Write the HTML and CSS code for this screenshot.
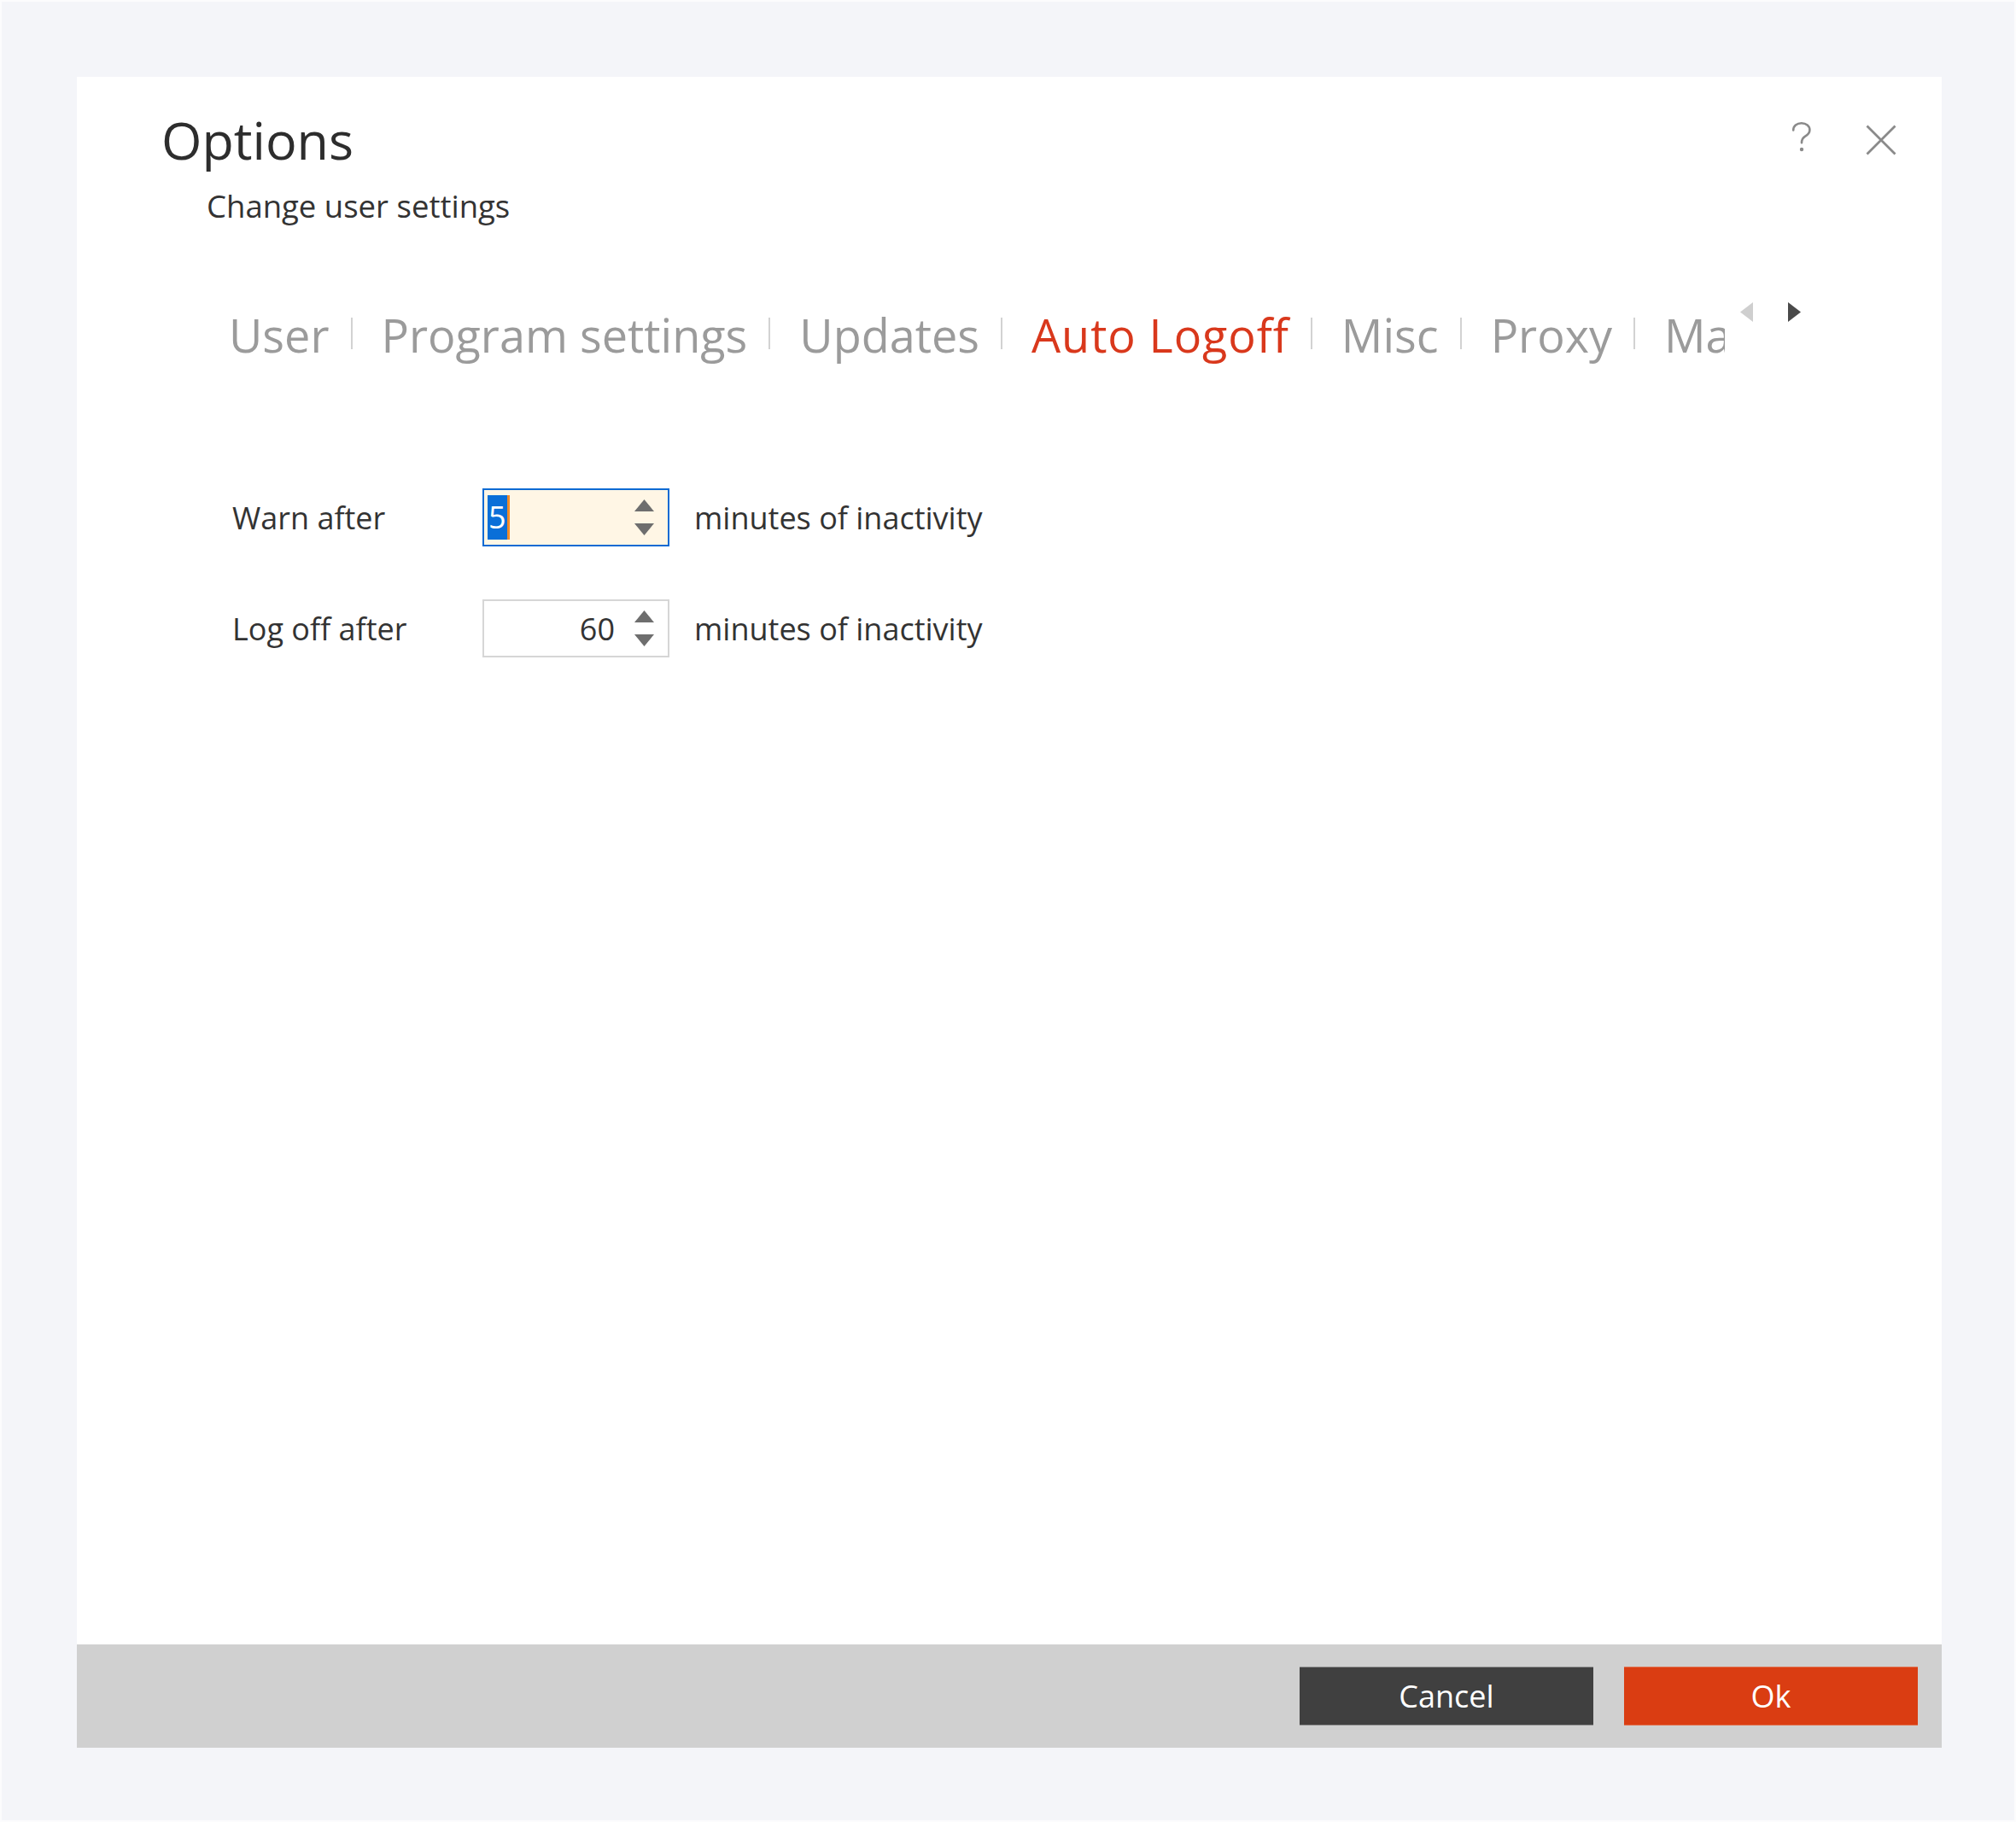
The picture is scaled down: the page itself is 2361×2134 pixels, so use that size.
FILE: index.html
```html
<!DOCTYPE html>
<html lang="en">
<head>
<meta charset="utf-8">
<title>Options</title>
<link rel="stylesheet" href="styles.css">
</head>
<body>
<div class="page">
  <div class="dialog">
    <header class="dlg-head">
      <div class="titles">
        <h1 class="title">Options</h1>
        <p class="subtitle">Change user settings</p>
      </div>
      <div class="head-icons">
        <svg class="icon-help" width="24" height="36" viewBox="0 0 24 36">
          <path d="M2.2 9.5 C2.2 4.6 6.2 1.3 11.8 1.3 C17.4 1.3 21.4 4.6 21.4 9.2 C21.4 13.2 18.6 15.2 15.8 16.9 C13.1 18.6 12 20.2 12 24.2" fill="none" stroke="#8a8a8a" stroke-width="2.6" stroke-linecap="round"/>
          <circle cx="12" cy="32" r="2.2" fill="#8a8a8a"/>
        </svg>
        <svg class="icon-close" width="36" height="36" viewBox="0 0 36 36">
          <path d="M1.5 1.5 L34.5 34.5 M34.5 1.5 L1.5 34.5" stroke="#8a8a8a" stroke-width="2.8" fill="none"/>
        </svg>
      </div>
    </header>

    <nav class="tabbar">
      <div class="tabs-viewport">
        <div class="tabs">
          <span class="tab">User</span><span class="sep"></span>
          <span class="tab">Program settings</span><span class="sep"></span>
          <span class="tab">Updates</span><span class="sep"></span>
          <span class="tab active">Auto Logoff</span><span class="sep"></span>
          <span class="tab">Misc</span><span class="sep"></span>
          <span class="tab">Proxy</span><span class="sep"></span>
          <span class="tab">Mail settings</span>
        </div>
      </div>
      <div class="tab-arrows">
        <svg class="arrow arrow-left" width="15" height="23" viewBox="0 0 15 23"><path d="M15 0 L0 11.5 L15 23 Z" fill="#cfcfcf"/></svg>
        <svg class="arrow arrow-right" width="15" height="23" viewBox="0 0 15 23"><path d="M0 0 L15 11.5 L0 23 Z" fill="#4a4a4a"/></svg>
      </div>
    </nav>

    <main class="content">
      <div class="form-row">
        <span class="label">Warn after</span>
        <div class="spin focused">
          <span class="spin-val left"><span class="sel">5</span><span class="caret"></span></span>
          <span class="spin-btns">
            <svg width="23" height="14" viewBox="0 0 23 14"><path d="M11.5 0 L23 14 L0 14 Z" fill="#6e6e6e"/></svg>
            <svg width="23" height="14" viewBox="0 0 23 14"><path d="M0 0 L23 0 L11.5 14 Z" fill="#6e6e6e"/></svg>
          </span>
        </div>
        <span class="suffix">minutes of inactivity</span>
      </div>
      <div class="form-row">
        <span class="label">Log off after</span>
        <div class="spin">
          <span class="spin-val right">60</span>
          <span class="spin-btns">
            <svg width="23" height="14" viewBox="0 0 23 14"><path d="M11.5 0 L23 14 L0 14 Z" fill="#6e6e6e"/></svg>
            <svg width="23" height="14" viewBox="0 0 23 14"><path d="M0 0 L23 0 L11.5 14 Z" fill="#6e6e6e"/></svg>
          </span>
        </div>
        <span class="suffix">minutes of inactivity</span>
      </div>
    </main>

    <footer class="dlg-foot">
      <button class="btn btn-cancel" type="button">Cancel</button>
      <button class="btn btn-ok" type="button">Ok</button>
    </footer>
  </div>
</div>
</body>
</html>
```

FILE: styles.css
```css
* { box-sizing: border-box; }

html, body {
  margin: 0;
  padding: 0;
  background: #fcfcfd;
}

body {
  font-family: "Segoe UI", "Open Sans", "Noto Sans", sans-serif;
  color: #333333;
}

.page {
  width: 2361px;
  height: 2134px;
  border: 2px solid #fcfcfd;
  background: #f4f5f9;
  padding: 88px 0 0 88px;
}

.dialog {
  width: 2184px;
  height: 1957px;
  background: #ffffff;
  display: flex;
  flex-direction: column;
}

/* Header */
.dlg-head {
  display: flex;
  justify-content: space-between;
  align-items: flex-start;
  padding: 43px 53px 0 99px;
}

.title {
  margin: 0;
  font-size: 61px;
  font-weight: 400;
  line-height: 1;
  color: #2d2d2d;
}

.subtitle {
  margin: 29px 0 0 53px;
  font-size: 36.5px;
  line-height: 1;
  color: #333333;
}

.head-icons {
  display: flex;
  align-items: flex-start;
  gap: 63px;
  padding-top: 10px;
}

.icon-help { display: block; }
.icon-close { display: block; margin-top: 3px; }

/* Tabs */
.tabbar {
  display: flex;
  align-items: flex-start;
  margin-top: 95px;
  padding-left: 178px;
}

.tabs-viewport {
  width: 1752px;
  overflow: hidden;
}

.tabs {
  display: flex;
  align-items: flex-start;
  white-space: nowrap;
}

.tab {
  font-size: 54px;
  line-height: 1.4;
  color: #9b9b9b;
}

.tab.active {
  color: #d9381c;
  letter-spacing: 0.9px;
}

.sep {
  flex: none;
  width: 2px;
  height: 37px;
  margin: 17px 34px 0 25px;
  background: #d2d2d2;
}

.tab-arrows {
  display: flex;
  gap: 41px;
  margin-left: 18px;
  margin-top: -1px;
}

.arrow { display: block; }

/* Form */
.content {
  flex: 1;
  padding: 142px 0 0 182px;
  display: flex;
  flex-direction: column;
  gap: 62px;
}

.form-row {
  display: flex;
  align-items: center;
  height: 68px;
}

.label {
  width: 293px;
  font-size: 36px;
  color: #333333;
}

.spin {
  display: flex;
  align-items: center;
  width: 219px;
  height: 68px;
  border: 2px solid #d6d6d6;
  background: #ffffff;
  padding: 0 16px 0 4px;
}

.spin.focused {
  border-color: #0b6ad3;
  background: #fff6e5;
}

.spin-val {
  flex: 1;
  font-size: 36px;
  color: #333333;
  display: flex;
  align-items: center;
}

.spin-val.right {
  justify-content: flex-end;
  padding-right: 23px;
}

.sel {
  display: inline-block;
  background: #0a6fd8;
  color: #ffffff;
  height: 52px;
  line-height: 52px;
  padding: 0 1px;
}

.caret {
  display: inline-block;
  width: 3px;
  height: 52px;
  background: #f08a2a;
}

.spin-btns {
  display: flex;
  flex-direction: column;
  gap: 14px;
}

.spin-btns svg { display: block; }

.suffix {
  margin-left: 29px;
  font-size: 36px;
  color: #333333;
}

/* Footer */
.dlg-foot {
  height: 121px;
  background: #d0d0d0;
  display: flex;
  justify-content: flex-end;
  align-items: center;
  gap: 36px;
  padding-right: 28px;
}

.btn {
  width: 344px;
  height: 69px;
  border: 0;
  border-top: 1px solid #8e8e8e;
  border-bottom: 1px solid #8e8e8e;
  font-family: inherit;
  font-size: 36px;
  color: #ffffff;
  padding: 0;
}

.btn-cancel { background: #404040; }

.btn-ok {
  background: #da3d12;
  border-top-color: #e0714f;
  border-bottom-color: #e0714f;
}
```
